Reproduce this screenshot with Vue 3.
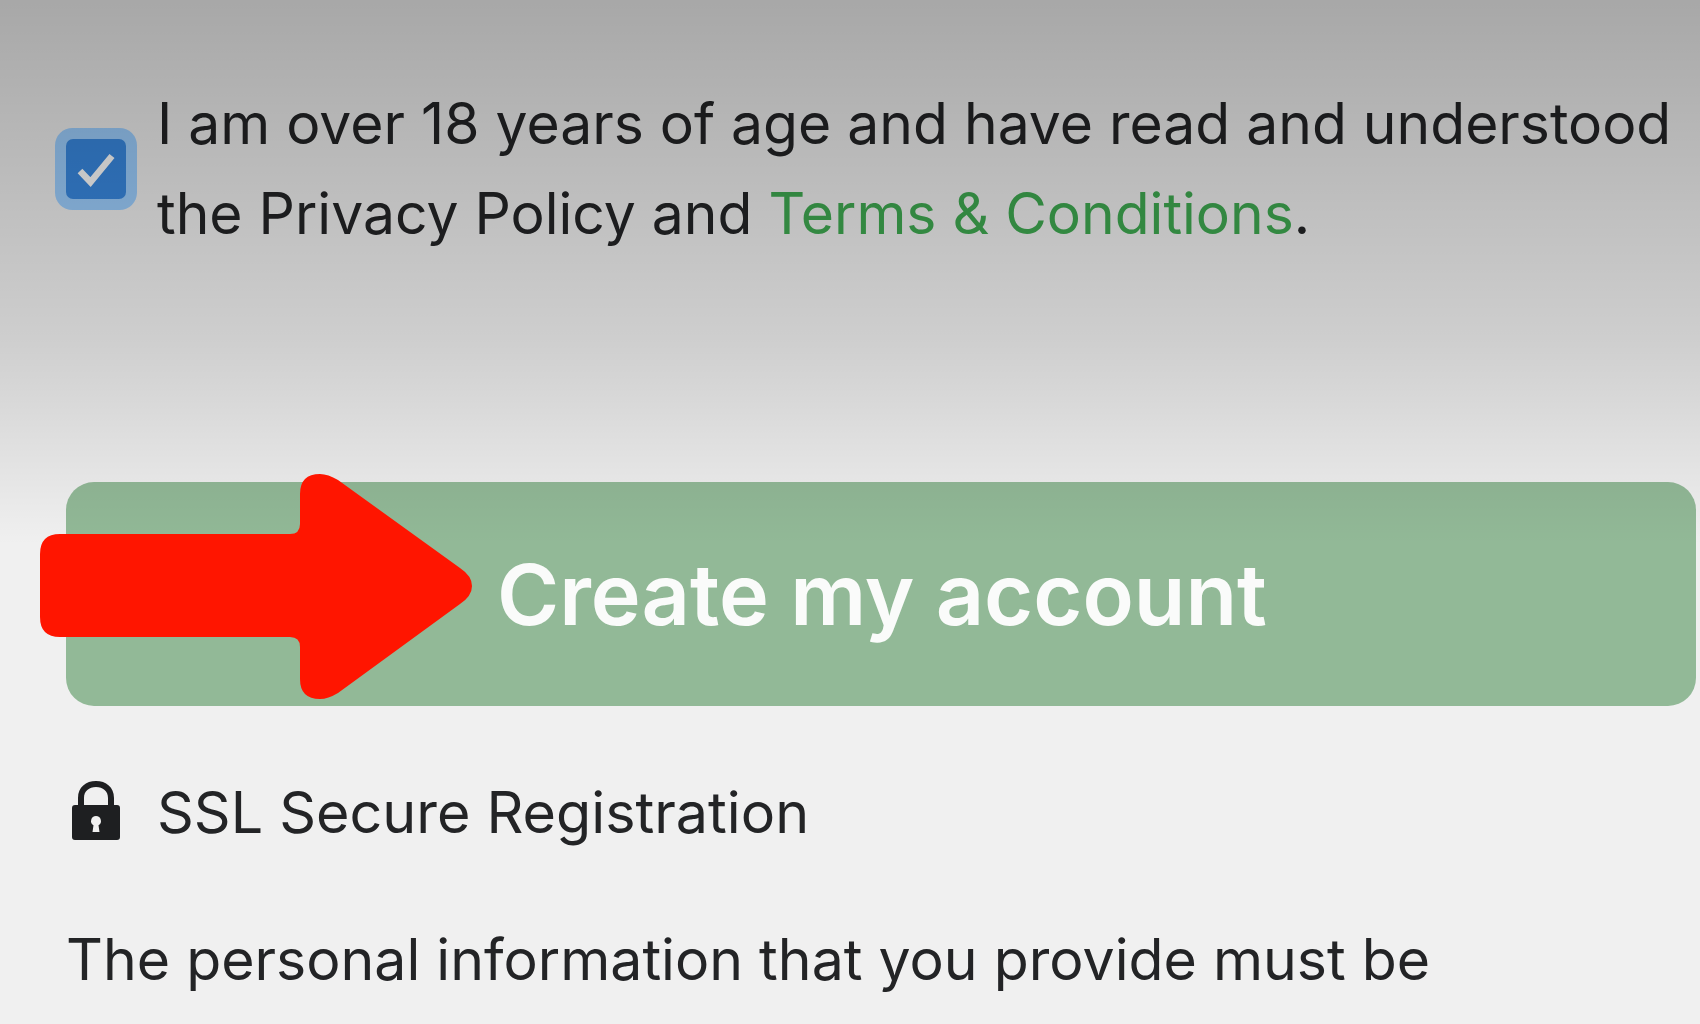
<script setup>
import { ref } from 'vue'

const accepted = ref(true)
</script>

<template>
  <div class="page">
    <label class="consent">
      <input v-model="accepted" type="checkbox" class="native-check" />
      <span class="check-box">
        <svg v-if="accepted" viewBox="0 0 60 60" class="check-mark">
          <path d="M14 32 L24.5 43 L46 17" fill="none" stroke="#ffffff" stroke-width="6.5" />
        </svg>
      </span>
      <span class="consent-text">
        I am over 18 years of age and have read and understood<br />
        the Privacy Policy and <a class="terms" href="#">Terms &amp; Conditions</a>.
      </span>
    </label>

    <div class="submit-wrap">
      <button type="button" class="submit">Create my account</button>
      <svg class="arrow" viewBox="0 0 432 225">
        <path
          d="M20 60 H250 Q260 60 260 50 V20 Q260 0 280 0 Q288 0 298 6 L420 94 Q432 102 432 112 Q432 122 420 130 L298 219 Q288 225 280 225 Q260 225 260 205 V173 Q260 163 250 163 H20 Q0 163 0 143 V80 Q0 60 20 60 Z"
          fill="#ff1500"
        />
      </svg>
    </div>

    <div class="secure">
      <svg class="lock" viewBox="0 0 48 59">
        <path
          d="M6 25 V17 C6 6 14 0 24 0 C34 0 42 6 42 17 V25 H36 V17 C36 10 31 6 24 6 C17 6 12 10 12 17 V25 Z"
          fill="#1e1f21"
        />
        <path
          fill-rule="evenodd"
          d="M3 24 H45 Q48 24 48 27 V56 Q48 59 45 59 H3 Q0 59 0 56 V27 Q0 24 3 24 Z M24 35 A5 5 0 0 0 21.5 44.3 L20.5 51 H27.5 L26.5 44.3 A5 5 0 0 0 24 35 Z"
          fill="#1e1f21"
        />
      </svg>
      <span>SSL Secure Registration</span>
    </div>

    <p class="note">The personal information that you provide must be</p>
  </div>
</template>

<style scoped>
.page {
  position: relative;
  box-sizing: border-box;
  width: 1700px;
  height: 1024px;
  overflow: hidden;
  padding: 79px 0 0 66px;
  background: #f0f0f0;
  font-family: Inter, "Liberation Sans", sans-serif;
  color: #232426;
  font-size: 57.4px;
}

/* dark fade laid over the top of the page, the arrow stays above it */
.page::after {
  content: "";
  position: absolute;
  left: 0;
  top: 0;
  width: 100%;
  height: 545px;
  background: linear-gradient(
    180deg,
    rgba(0, 0, 0, 0.3) 0,
    rgba(0, 0, 0, 0.14) 340px,
    rgba(0, 0, 0, 0.045) 482px,
    rgba(0, 0, 0, 0) 545px
  );
  pointer-events: none;
}

.consent {
  display: flex;
  align-items: center;
  gap: 31px;
  font-size: 57px;
  line-height: 90px;
  white-space: nowrap;
}

.native-check {
  position: absolute;
  opacity: 0;
  pointer-events: none;
}

.check-box {
  flex: none;
  width: 60px;
  height: 60px;
  border-radius: 7px;
  background: #3989e1;
  box-shadow: 0 0 0 11px #9dcfff;
}

.check-mark {
  display: block;
  width: 60px;
  height: 60px;
}

.terms {
  color: #3fa951;
  text-decoration: none;
}

.submit-wrap {
  position: relative;
  margin-top: 223px;
  width: 1630px;
}

.submit {
  display: block;
  box-sizing: border-box;
  width: 100%;
  height: 224px;
  padding: 0 0 0 431px;
  border: 0;
  border-radius: 28px;
  background: #92b997;
  color: #fafbfa;
  font-family: inherit;
  font-size: 84.4px;
  font-weight: 600;
  text-align: left;
}

.arrow {
  position: absolute;
  z-index: 1;
  left: -26px;
  top: -8px;
  width: 432px;
  height: 225px;
}

.secure {
  display: flex;
  align-items: center;
  gap: 37px;
  margin-top: 73px;
  padding-left: 6px;
  line-height: 66px;
}

.lock {
  flex: none;
  width: 48px;
  height: 59px;
  margin-top: -3px;
}

.note {
  margin: 82px 0 0;
  font-size: 57.2px;
  line-height: 66px;
  white-space: nowrap;
}
</style>
<style>
body {
  background: #f0f0f0;
}
</style>
